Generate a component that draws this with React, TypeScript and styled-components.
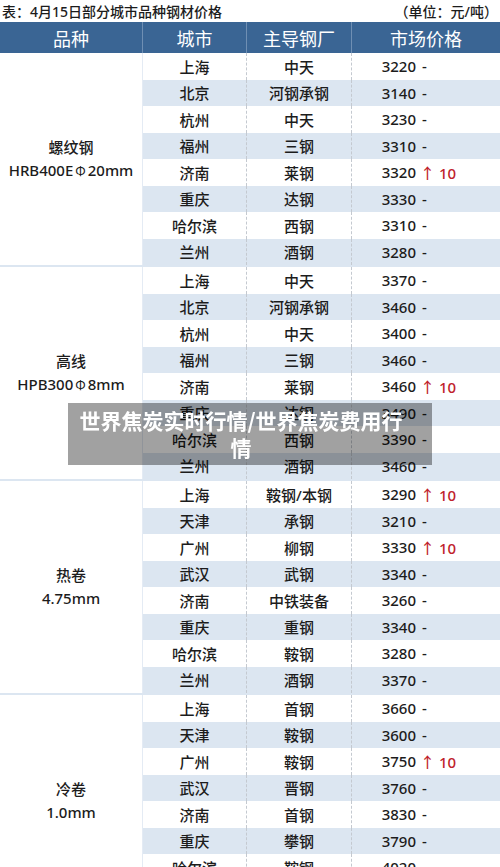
import styled, { createGlobalStyle } from "styled-components";

const GlobalStyle = createGlobalStyle`
  html, body {
    margin: 0;
    padding: 0;
    background: #fff;
  }
  body {
    font-family: "Noto Sans", "Noto Sans CJK SC", sans-serif;
    color: #1c1c1c;
    overflow: hidden;
  }
`;

type Row = [string, string, number, number | null];

type Section = {
  name: string;
  spec: [string, string];
  rows: Row[];
};

const sections: Section[] = [
  {
    name: "螺纹钢",
    spec: ["HRB400E", "20mm"],
    rows: [
      ["上海", "中天", 3220, null],
      ["北京", "河钢承钢", 3140, null],
      ["杭州", "中天", 3230, null],
      ["福州", "三钢", 3310, null],
      ["济南", "莱钢", 3320, 10],
      ["重庆", "达钢", 3330, null],
      ["哈尔滨", "西钢", 3310, null],
      ["兰州", "酒钢", 3280, null],
    ],
  },
  {
    name: "高线",
    spec: ["HPB300", "8mm"],
    rows: [
      ["上海", "中天", 3370, null],
      ["北京", "河钢承钢", 3460, null],
      ["杭州", "中天", 3400, null],
      ["福州", "三钢", 3460, null],
      ["济南", "莱钢", 3460, 10],
      ["重庆", "达钢", 3490, null],
      ["哈尔滨", "西钢", 3390, null],
      ["兰州", "酒钢", 3460, null],
    ],
  },
  {
    name: "热卷",
    spec: ["4.75mm", ""],
    rows: [
      ["上海", "鞍钢/本钢", 3290, 10],
      ["天津", "承钢", 3210, null],
      ["广州", "柳钢", 3330, 10],
      ["武汉", "武钢", 3340, null],
      ["济南", "中铁装备", 3260, null],
      ["重庆", "重钢", 3340, null],
      ["哈尔滨", "鞍钢", 3280, null],
      ["兰州", "酒钢", 3370, null],
    ],
  },
  {
    name: "冷卷",
    spec: ["1.0mm", ""],
    rows: [
      ["上海", "首钢", 3660, null],
      ["天津", "鞍钢", 3600, null],
      ["广州", "鞍钢", 3750, 10],
      ["武汉", "晋钢", 3760, null],
      ["济南", "首钢", 3830, null],
      ["重庆", "攀钢", 3790, null],
      ["哈尔滨", "鞍钢", 4020, null],
      ["兰州", "酒钢", 4010, null],
    ],
  },
];

const COLS = "143px 104px 105px 148px";
const STRIPE = "#dce6f1";

const Page = styled.div`
  width: 500px;
`;

const TitleBar = styled.div`
  height: 22px;
  padding: 0 2px 0 2px;
  display: flex;
  align-items: center;
  justify-content: space-between;
  font-size: 14px;
  font-weight: 500;
`;

const HeaderRow = styled.div`
  display: grid;
  grid-template-columns: ${COLS};
  height: 31px;
  background: #3a6594;
`;

const HeaderCell = styled.div`
  display: flex;
  align-items: center;
  justify-content: center;
  color: #fff;
  font-size: 18px;
  border-right: 1px solid #6f8fb3;

  &:last-child {
    border-right: none;
  }
`;

const SectionGrid = styled.div`
  display: grid;
  grid-template-columns: ${COLS};
  grid-template-rows: repeat(8, 26.5px);
  border-bottom: 2px solid ${STRIPE};
`;

const KindCell = styled.div`
  grid-row: 1 / span 8;
  grid-column: 1;
  display: flex;
  flex-direction: column;
  align-items: center;
  justify-content: center;
  font-size: 15px;
  font-weight: 500;
  line-height: 23px;
  border-right: 1px solid #e4ebf4;
`;

const Phi = styled.span`
  font-family: "Noto Sans CJK SC", sans-serif;
  font-size: 13px;
  font-weight: 400;
  margin: 0 2px;
`;

const Cell = styled.div<{ $stripe: boolean }>`
  display: flex;
  align-items: center;
  font-size: 15px;
  font-weight: 500;
  background: ${({ $stripe }) => ($stripe ? STRIPE : "#fff")};
`;

const CityCell = styled(Cell)`
  justify-content: center;
  border-right: 1px dashed #c4c9d0;
`;

const MillCell = styled(Cell)`
  justify-content: center;
  border-right: 1px dashed #c4c9d0;
`;

const PriceCell = styled(Cell)``;

const PriceValue = styled.span`
  width: 64px;
  text-align: right;
`;

const Change = styled.span<{ $up: boolean }>`
  margin-left: ${({ $up }) => ($up ? "4px" : "6px")};
  color: ${({ $up }) => ($up ? "#c0222b" : "inherit")};
`;

const Overlay = styled.div`
  position: fixed;
  left: 50%;
  top: 50%;
  transform: translate(-50%, -50%);
  width: 364px;
  box-sizing: border-box;
  padding: 4px 22px 4px 4px;
  background: rgba(0, 0, 0, 0.37);
  color: #fff;
  font-family: "Noto Sans CJK SC", sans-serif;
  font-weight: 700;
  font-size: 21px;
  line-height: 27px;
  text-align: center;
`;

export default function App() {
  return (
    <Page>
      <GlobalStyle />
      <TitleBar>
        <span>表：4月15日部分城市品种钢材价格</span>
        <span>（单位：元/吨）</span>
      </TitleBar>
      <HeaderRow>
        <HeaderCell>品种</HeaderCell>
        <HeaderCell>城市</HeaderCell>
        <HeaderCell>主导钢厂</HeaderCell>
        <HeaderCell>市场价格</HeaderCell>
      </HeaderRow>
      {sections.map((section) => (
        <SectionGrid key={section.name}>
          <KindCell>
            <span>{section.name}</span>
            {section.spec[1] ? (
              <span>
                {section.spec[0]}
                <Phi>Φ</Phi>
                {section.spec[1]}
              </span>
            ) : (
              <span>{section.spec[0]}</span>
            )}
          </KindCell>
          {section.rows.map(([city, mill, price, change], i) => {
            const stripe = i % 2 === 1;
            return [
              <CityCell key={`c${i}`} $stripe={stripe}>
                {city}
              </CityCell>,
              <MillCell key={`m${i}`} $stripe={stripe}>
                {mill}
              </MillCell>,
              <PriceCell key={`p${i}`} $stripe={stripe}>
                <PriceValue>{price}</PriceValue>
                <Change $up={change !== null}>
                  {change !== null ? `↑ ${change}` : "-"}
                </Change>
              </PriceCell>,
            ];
          })}
        </SectionGrid>
      ))}
      <Overlay>世界焦炭实时行情/世界焦炭费用行情</Overlay>
    </Page>
  );
}
